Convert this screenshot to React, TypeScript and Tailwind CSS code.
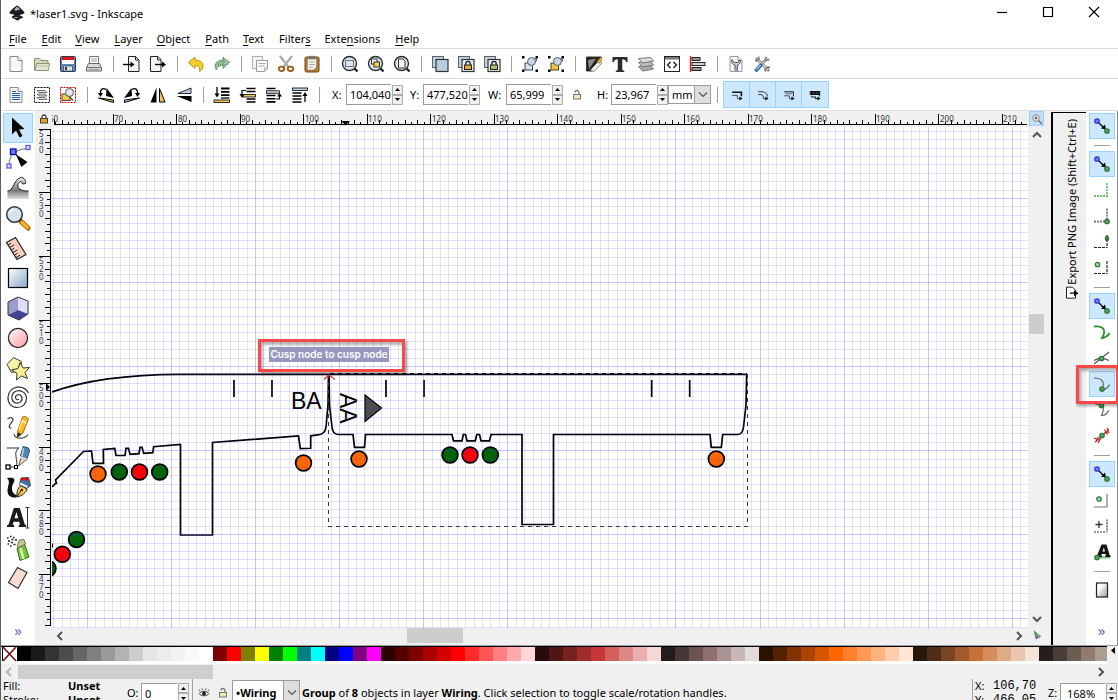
import React from "react";

type Kids = { children?: React.ReactNode };

const PAGE = "M4 2.5h8l4 4v11H4z";

function Ico({ children }: Kids) {
  return (
    <svg viewBox="0 0 20 20" className="size-5 shrink-0" fill="none" aria-hidden="true">
      {children}
    </svg>
  );
}

function Page({ stroke = "#8a8a8a" }: { stroke?: string }) {
  return (
    <>
      <path d={PAGE} fill="#f7f7f7" stroke={stroke} />
      <path d="M12 2.5v4h4" fill="#fff" stroke={stroke} />
    </>
  );
}

function Lens({ children }: Kids) {
  return (
    <>
      <path d="M14.5 14.5l3 3" stroke="#222" strokeWidth="2.4" />
      <circle cx="9.5" cy="9.5" r="7" fill="#dde6ec" stroke="#2b2b2b" strokeWidth="1.4" />
      {children}
    </>
  );
}

function Stack({ lock }: { lock?: string }) {
  return (
    <>
      <rect x="2.5" y="2.5" width="11" height="11" fill="#c3d3e2" stroke="#56616c" />
      <rect x="6" y="5.5" width="12" height="12" fill={lock ? "#e8edf2" : "#b9cde0"} stroke="#333" strokeWidth="1.2" />
      {lock && (
        <>
          <path d="M9.8 11V9.5a2.2 2.2 0 0 1 4.4 0V11" stroke="#222" strokeWidth="1.3" />
          <rect x="8.5" y="11" width="7" height="4.5" fill={lock} stroke="#222" />
        </>
      )}
    </>
  );
}

function Handles({ fill }: { fill: string }) {
  return (
    <>
      <path d="M2 2h2.5v2.5H2zM15.5 2H18v2.5h-2.5zM2 15.5h2.5V18H2zM15.5 15.5H18V18h-2.5z" fill="#000" />
      <rect x="5" y="9" width="7.5" height="7" fill={fill} stroke="#444" />
      <path d="M12 9l3-5 2 2-5 6" fill="#cfdce8" stroke="#555" />
      <circle cx="11.5" cy="7.5" r="4" fill="#c3d6e6" stroke="#526170" />
    </>
  );
}

const fileIcons: (null | [string, React.ReactNode])[] = [
  ["New", <Page />],
  ["Open", <><path d="M2.5 16.5v-12h5l1.5 2h7v3" fill="#cfd8b8" stroke="#8b957a" /><path d="M3 16.5l1.5-7h13l-1 7z" fill="#dfe6cc" stroke="#8b957a" /><path d="M5 12h11" stroke="#b7c29c" /></>],
  ["Save", <><rect x="2.5" y="2.5" width="15" height="15" rx="1" fill="#5d86b5" stroke="#26374d" /><path d="M4 3h12v3H4z" fill="#e01818" /><path d="M4 6h12v4H4z" fill="#fff" /><path d="M5.5 12h9v5h-9z" fill="#dcdfe3" stroke="#34475f" strokeWidth=".7" /><path d="M7 13h2v3H7z" fill="#26374d" /></>],
  ["Print", <><path d="M5.5 9.5V2.5h9v7" fill="#fff" stroke="#777" /><path d="M7 5h6M7 7h6" stroke="#999" /><path d="M2.5 13.5l2-4h11l2 4v3.500h-15z" fill="#d9d9d9" stroke="#666" /><path d="M3 13.5h14" stroke="#777" /><path d="M5 15.3h10" stroke="#999" /></>],
  null,
  ["Import", <><path d="M6.5 2.5h7l3.500 3.500v11.500H6.500z" fill="#f5f5f5" stroke="#222" /><path d="M13.5 2.5V6H17" stroke="#222" /><path d="M1 10.5h9" stroke="#000" strokeWidth="1.4" /><path d="M8.5 7.5l4 3-4 3z" fill="#000" /></>],
  ["Export", <><path d="M2.5 2.5h7.500l3 3v12H2.500z" fill="#f5f5f5" stroke="#222" /><path d="M9.5 2.5V6H13" stroke="#222" /><path d="M7 10.5h8" stroke="#000" strokeWidth="1.4" /><path d="M14 7.5l4 3-4 3z" fill="#000" /></>],
  null,
  ["Undo", <path d="M2.5 8.5L9 3v3c5 0 8 2.500 8 6 0 2.500-1.500 4.500-3.500 5.500 1-3.500-.5-6-4.500-6v3z" fill="#f2cf2e" stroke="#b99212" />],
  ["Redo", <><path d="M17.5 8.5L11 3v3c-5 0-8 2.500-8 6 0 1.500.5 3 1.500 4 .5-3 2.500-4.500 6.500-4.500v3z" fill="#9cc2a0" stroke="#4d8454" strokeDasharray="1.500 .8" /><path d="M4 12c1-3 4-4.500 9-4.500M6 10.500h9M11.500 5v8" stroke="#5d9164" strokeDasharray="1 1" /></>],
  null,
  ["Copy", <><rect x="2.5" y="2.5" width="10" height="12" fill="#f2f2f2" stroke="#b0b0b0" /><path d="M6.5 6.5h11v8l-3 3h-8z" fill="#fafafa" stroke="#999" /><path d="M8.5 9.5h7M8.500 12h6M14.500 17v-3h3" stroke="#aaa" /></>],
  ["Cut", <><path d="M4 2l8.500 11M16 2L7.500 13" stroke="#777" strokeWidth="2" /><path d="M4 2l8.500 11M16 2L7.500 13" stroke="#ddd" strokeWidth=".8" /><ellipse cx="5.5" cy="14.8" rx="2.8" ry="2.2" stroke="#9a5a17" strokeWidth="1.8" /><ellipse cx="14.5" cy="14.8" rx="2.8" ry="2.2" stroke="#9a5a17" strokeWidth="1.8" /></>],
  ["Paste", <><rect x="3" y="3" width="14" height="15" rx="1.5" fill="#b87a2c" stroke="#6b4311" /><path d="M5.5 5h9v8l-3 3h-6z" fill="#f2f2f2" stroke="#888" strokeWidth=".6" /><rect x="7" y="1.8" width="6" height="3" fill="#777" /><path d="M7 8h6M7 10.500h6M7 13h4" stroke="#aaa" /></>],
  null,
  ["Zoom selection", <Lens><rect x="5.5" y="6.5" width="8" height="6" stroke="#000" strokeDasharray="1 1" /></Lens>],
  ["Zoom drawing", <Lens><rect x="5.5" y="5" width="5.5" height="5" fill="#fff" stroke="#333" /><rect x="8" y="8" width="5.5" height="5" fill="#f4d34f" stroke="#333" /></Lens>],
  ["Zoom page", <Lens><path d="M6.5 5h4.500l2 2v7H6.500z" fill="#f9f9f9" stroke="#333" /></Lens>],
  null,
  ["Duplicate", <Stack />],
  ["Clone", <Stack lock="#e9a92f" />],
  ["Unlink clone", <Stack lock="#a8c46a" />],
  null,
  ["Group", <Handles fill="#d7e3ee" />],
  ["Ungroup", <Handles fill="#f3c52c" />],
  null,
  ["Fill and stroke", <><path d="M2.5 3h15L8 17H2.500z" fill="#222" stroke="#333" /><path d="M4 6l8-1.500L5 15z" fill="#8d8d8d" /><path d="M6 16.500L15.500 6l2.500 3-8 8.500z" fill="#f4f1e6" stroke="#555" strokeWidth=".7" /><path d="M13 7.500l3.500-4 1.500 2-3 4z" fill="#e8a92e" stroke="#7a5410" strokeWidth=".5" /></>],
  ["Text and font", <path d="M2.5 3h15v5h-1.500c-.3-2-1-2.800-3.700-2.800V15c0 1.200.5 1.600 2 1.700V18H5.800v-1.300c1.500-.1 2-.5 2-1.700V5.200C5 5.200 4.300 6 4 8H2.500z" fill="#2b2b2b" />],
  ["Layers", <><path d="M2.500 12.500l12-1 3 3.500-11 2z" fill="#aaa" stroke="#777" /><path d="M2.500 8.500l12-1 3 3.500-11 2z" fill="#bbb" stroke="#777" /><path d="M2.500 4.500l12-1 3 3.500-11 2z" fill="#ddd" stroke="#777" /></>],
  ["XML editor", <><rect x="2.5" y="2.5" width="15" height="15" fill="#fafafa" stroke="#222" /><path d="M3 3h14v2.500H3z" fill="#777" /><path d="M8.500 8L5.500 11l3 3M11.500 8l3 3-3 3" stroke="#111" strokeWidth="1.2" /></>],
  ["Align", <><path d="M2.500 2v16" stroke="#d11" strokeWidth="1.3" /><rect x="4" y="3.500" width="8" height="3" fill="#999" stroke="#222" /><rect x="4" y="8.500" width="13" height="3" fill="#c9d8e6" stroke="#222" /><rect x="4" y="13.500" width="9" height="3" fill="#999" stroke="#222" /></>],
  null,
  ["Document properties", <><Page stroke="#999" /><path d="M6 5.500c-1.500 3 1 5.500 3 5.500v5.500h2.500V11c2-.5 4-3 2.500-5.500L12 8.500H8z" fill="#ccc" stroke="#555" /><path d="M9 14h2.500v3H9z" fill="#6f9fd8" /></>],
  ["Preferences", <><path d="M5 5l11 11" stroke="#777" strokeWidth="3" strokeLinecap="round" /><path d="M5 5l11 11" stroke="#e4e4e4" strokeWidth="1.400" /><path d="M3 6.500L5 7l2-2-.5-2.500M13.500 17.500l-.5-2 2.500-2.500 2.500.5" stroke="#777" strokeWidth="1.500" /><path d="M16 4l-7 6.500" stroke="#777" strokeWidth="2.600" /><path d="M16 4l-7 6.500" stroke="#eee" strokeWidth="1" /><path d="M13.500 2.500v3.500h4" stroke="#888" strokeWidth="1.300" /><path d="M8.500 11.500L4.500 16" stroke="#3e6cab" strokeWidth="3.800" strokeLinecap="round" /><path d="M8.500 11l-4 4.500" stroke="#9dc0ea" strokeWidth="1.400" /></>],
];

const BARS = "M9 3.500h8.500M9 6.800h8.500M9 10.100h8.500";

const selectIcons: (null | [string, React.ReactNode])[] = [
  ["Select all", <><Page stroke="#888" /><path d="M6 6.500h4M6 8.500h8M6 10.500h8M6 12.500h8M6 14.500h8" stroke="#1f5aa0" strokeWidth="1.200" /></>],
  ["Select all in all layers", <><rect x="2.5" y="2.5" width="15" height="15" stroke="#000" strokeDasharray="2 1" /><path d="M5 5.500h8l2 2H7zM5 9h8l2 2H7zM5 12.500h8l2 2H7z" fill="#ddd" stroke="#555" strokeWidth=".8" /></>],
  ["Deselect", <><rect x="2.5" y="2.5" width="15" height="15" stroke="#c00" strokeDasharray="2 1" /><rect x="4" y="9" width="8" height="6.5" fill="#f3c83e" stroke="#444" /><path d="M10 10l5 5.500" stroke="#555" strokeWidth="1.5" /><circle cx="11.500" cy="7.500" r="4" fill="#dbe6ee" stroke="#555" /></>],
  null,
  ["Rotate left", <><path d="M10.500 3l7.500 10-8-2z" fill="#000" /><path d="M2.500 13l15 2v2.500z" fill="#f1c661" stroke="#000" /><path d="M10 4.500C7 2.500 4 4 4.500 9" stroke="#000" strokeWidth="1.300" /><path d="M2 8h5l-2.500 4z" fill="#000" /></>],
  ["Rotate right", <><path d="M9.500 3L2 13l8-2z" fill="#000" /><path d="M17.500 13l-15 2v2.500z" fill="#c2d2e0" stroke="#000" /><path d="M10 4.500c3-2 6-.5 5.500 4.500" stroke="#000" strokeWidth="1.300" /><path d="M18 8h-5l2.500 4z" fill="#000" /></>],
  ["Flip horizontal", <><path d="M8.500 2.500v15h-6z" fill="#000" /><path d="M11.500 3.500v13.500h5.500z" fill="#f1c661" stroke="#000" /></>],
  ["Flip vertical", <><path d="M17 3v5.500H4z" fill="#b9cbdc" stroke="#000" strokeWidth=".8" /><path d="M17.500 17v-6h-15z" fill="#000" /></>],
  null,
  ["Lower to bottom", <><path d={BARS} stroke="#000" strokeWidth="1.800" /><path d="M9 13h8.500" stroke="#000" strokeWidth="1.3" /><rect x="2" y="15" width="15.5" height="2.500" fill="#f1c661" stroke="#000" strokeWidth=".8" /><path d="M5 2v8" stroke="#000" strokeWidth="1.3" /><path d="M2.500 8.500h5L5 12.500z" fill="#000" /></>],
  ["Lower", <><path d="M8.500 3.500h9M8.500 6.500h9M8.500 14h9M8.500 17h9" stroke="#000" strokeWidth="1.600" /><rect x="5" y="9.500" width="12.5" height="2.500" fill="#f1c661" stroke="#000" strokeWidth=".8" /><path d="M8 5.500H4V10" stroke="#000" strokeWidth="1.2" /><path d="M1.500 9h5L4 13z" fill="#000" /></>],
  ["Raise", <><path d="M2.500 3.500h9M2.500 10.500h9M2.500 13.700h9M2.500 16.900h9" stroke="#000" strokeWidth="1.600" /><rect x="2.500" y="5.800" width="13" height="2.500" fill="#c2d2e0" stroke="#000" strokeWidth=".8" /><path d="M12 14h3.500v-3" stroke="#000" strokeWidth="1.2" /><path d="M13 11.500h5l-2.500-3.500z" fill="#000" /></>],
  ["Raise to top", <><path d="M2.500 8h9M2.500 11h9M2.500 14h9M2.500 17h9" stroke="#000" strokeWidth="1.700" /><rect x="2.500" y="3" width="15" height="2.500" fill="#c2d2e0" stroke="#000" strokeWidth=".8" /><path d="M15 17V9" stroke="#000" strokeWidth="1.3" /><path d="M12.500 11H17.500L15 7z" fill="#000" /></>],
];

const affectIcons: [string, React.ReactNode][] = [
  ["Scale stroke width", <><path d="M4 6.500h11.500v5" stroke="#111" strokeWidth="2" /><path d="M4 10.500h6.500v4h3" stroke="#444" strokeWidth="1.200" /></>],
  ["Scale rounded corners", <><path d="M4 6h4.500c4 0 7 2.500 7 6" stroke="#333" strokeWidth="1.300" /><path d="M4 9.500h3.500c2 0 3 2 3 5h3" stroke="#333" strokeWidth="1.200" /></>],
  ["Move gradients", <><path d="M4 6h11.500v6" stroke="#222" strokeWidth="1.300" /><path d="M5 8h9" stroke="#8a93a5" strokeWidth="2.500" /><path d="M4 11h6.500v3.500h3" stroke="#444" strokeWidth="1.200" /></>],
  ["Move patterns", <><path d="M3.500 7.500h13" stroke="#111" strokeWidth="5" /><path d="M3.500 7.500h13" stroke="#9aa" strokeDasharray="1.500 2.500" /><path d="M6 11v1.500h4.500v2h3M15.500 9v3" stroke="#222" strokeWidth="1.300" /></>],
];

const toolIcons: [string, React.ReactNode][] = [
  ["Select", <path d="M8 3.500v17l4-4 3.500 7 3-1.500-3.500-6.500 5.500-.5z" fill="#000" />],
  ["Edit nodes", <><path d="M5 22C5 12 10 5.500 23 4.500" stroke="#666" /><rect x="3" y="20" width="4" height="4" fill="#dcdcff" stroke="#6666e8" strokeWidth="1.4" /><rect x="22" y="1.500" width="4" height="4" fill="#dcdcff" stroke="#6666e8" strokeWidth="1.4" /><rect x="6.500" y="5" width="5.5" height="5.5" fill="#6d7cf0" stroke="#1414b8" strokeWidth="1.4" /><path d="M11.500 10l12 8-6 5z" fill="#000" /></>],
  ["Tweak", <><path d="M3.500 25v-8c6 0 6-11 13-13.500 4 0 5.500 3 5 6l-3 .5c0-2-2-3-3.500-1.500-3 3-1 9 9.500 8.500v8z" fill="url(#gray)" /><path d="M3.500 17c6 0 6-11 13-13.500 4 0 5.500 3 5 6l-3 .5c0-2-2-3-3.500-1.500-3 3-1 9 9.500 8.500" stroke="#222" /></>],
  ["Zoom", <><path d="M17 17.500l7 6.500" stroke="#8c5200" strokeWidth="5" strokeLinecap="round" /><path d="M18 18.500l5.500 5" stroke="#ffb31a" strokeWidth="3.5" strokeLinecap="round" /><circle cx="10.500" cy="10.500" r="7.8" fill="#d4e2ef" stroke="#333" strokeWidth="1.5" /><path d="M5.500 10a5 5 0 0 1 5-4.500" stroke="#fff" strokeWidth="1.5" /></>],
  ["Measure", <><path d="M2.500 8.500L11.500 3.500 22 20.500 13 25.500z" fill="#f5cdbc" stroke="#222" strokeWidth="1.2" /><path d="M4 11l3-1.700M5.500 13.500l4.500-2.500M7.200 16l3-1.700M8.800 18.500l4.500-2.500M10.500 21l3-1.700M12 23.500l4-2.200" stroke="#222" /></>],
  ["Rectangle", <rect x="4.500" y="4.500" width="19" height="19" fill="url(#blue)" stroke="#000" strokeWidth="1.2" />],
  ["3D box", <><path d="M4 8L14 3v13L4 21z" fill="#9b9bd0" /><path d="M14 3l10 4v13l-10-4z" fill="#dedef6" /><path d="M4 21l10-5 10 4-9 6z" fill="#44449a" /><path d="M4 8L14 3l10 4v13l-9 6-11-5z" stroke="#333" /></>],
  ["Ellipse", <circle cx="14" cy="14" r="9.6" fill="url(#pink)" stroke="#222" strokeWidth="1.2" />],
  ["Star", <><path d="M9.500 3.500l8 4-1.500 9-8.500 2-4.500-8z" fill="#f7f1a8" stroke="#444" /><path d="M16 8.500l3 5.500 6.500-.5-4.500 5 2.500 6-6-2.500-5 4 .5-6.500-5.500-3.500 6.500-1.500z" fill="#fbef8e" stroke="#333" /></>],
  ["Spiral", <path d="M15 15c-1 1.500-3.500.5-3.500-1.500 0-3 4.500-4 6-1 2 4-2 7.500-5.500 6.500-5-1.500-5.500-8-1.500-11 5-3.500 11.500 0 12 6 .2 5.500-4 9.500-9 9.500-6.500 0-10-5-9.500-10.500C4.500 8 8 4 13 3.200c5.500-.7 9.500 2 11.500 5.800" stroke="#333" strokeWidth="1.2" />],
  ["Pencil", <><path d="M3.500 5c5-3 7 0 4 3.500s-3 6 0 5.500M10 20c1 6 11 5 14 .5" stroke="#444" strokeWidth="1.2" /><path d="M13 23.500l1-7.500L18.500 3c2-1.200 5 0 6 2L19 19z" fill="#ffb820" stroke="#8a4f00" strokeWidth=".8" /><path d="M17.500 7l4.500 2" stroke="#fff0b0" strokeWidth="2" /><path d="M15 16l3-9" stroke="#ffe28a" strokeWidth="1.500" /><path d="M13 23.500l.7-5 4 1.500z" fill="#222" /></>],
  ["Bezier", <><path d="M3 4h12C8 8 15 17 12 23H4.500" stroke="#333" /><rect x="2" y="21" width="4" height="4" fill="#fff" stroke="#000" strokeWidth="1.3" /><rect x="10.500" y="21.500" width="3" height="3" fill="#fff" stroke="#000" /><path d="M14.500 22l2.500-8 5 2z" fill="#f3dfb0" stroke="#333" strokeWidth=".8" /><path d="M16.500 12L19 2.500l5.500 1.500 1 3-3 9z" fill="#4f86b5" stroke="#24486a" /><path d="M19.500 4l-1.500 8" stroke="#b5d3ea" strokeWidth="1.500" /><path d="M16 13l6.500 2.500" stroke="#ddd" strokeWidth="2" /></>],
  ["Calligraphy", <><path d="M3 4c7-1 9 1 6.500 5-3 5-2 12 6 13-5 3-12 1.500-12-5C3.500 11 7 8 3 4z" fill="#111" /><path d="M13 23c-.5-5 .5-9 4-11.500l6 3.500c0 3-5 7-10 8z" fill="#f6c650" stroke="#222" /><path d="M17 4l7.500-.5 2 8-4 3-7-3.500z" fill="#3f76a8" stroke="#222" strokeWidth=".8" /><path d="M17 5l8 .5" stroke="#d11" strokeWidth="2.500" /><path d="M16 9.500l7.500 3.500" stroke="#e8eef5" strokeWidth="2" /><path d="M13.500 22l4-6" stroke="#222" /><circle cx="17.800" cy="16" r="1.200" fill="#222" /></>],
  ["Text", <><path d="M3 23v-1.800l1.600-.7L9.800 4h6l5 16.500 1.400.7V23h-7.500v-1.800l1.300-.6-.8-2.800H9.600l-.9 2.800 1.500.6V23zM10.500 14.300h3.700l-1.700-6.300z" fill="#1a1a1a" /><path d="M21.500 3.500h4M21.500 24h4M23.500 3.500V24" stroke="#333" /></>],
  ["Spray", <><path d="M13 14.500l7.500-4.500 4.500 13-9 3.500z" fill="#7fc241" stroke="#2f6d12" /><path d="M16.500 14l3 11" stroke="#d3f3ae" strokeWidth="2.500" /><path d="M13.500 11l2-5 4.500-.5 1.500 4.500-7.500 4z" fill="#c9c98a" stroke="#555" strokeWidth=".8" /><path d="M3 4h1.500M6 2.500h1.500M9 3.500h1.500M4 7h2M7.500 5.500h2M11 6h2M3.500 10h1.500M7 8.500h2M6 12h1.500M9.500 10.500h2" stroke="#222" strokeWidth="1.500" /></>],
  ["Eraser", <path d="M13.500 3.500l9.500 5L14 24.500l-9.500-6z" fill="#f9dcd0" stroke="#333" strokeWidth="1.2" />],
];

function Pin({ x, y, fill = "#5f9f6a", stroke = "#2b7a3b" }: { x: number; y: number; fill?: string; stroke?: string }) {
  return <circle cx={x} cy={y} r="2.2" fill={fill} stroke={stroke} strokeWidth="1.3" />;
}

const SnapMain = (
  <>
    <Pin x={5} y={5} fill="#7c7cff" stroke="#3434e0" />
    <path d="M7 7l4 4" stroke="#000" strokeWidth="1.2" />
    <path d="M14 13.500l-5-1 4-4z" fill="#000" />
    <Pin x={15} y={15} />
  </>
);

type Snap = null | { name: string; on?: boolean; marked?: boolean; icon: React.ReactNode };
const snapIcons: Snap[] = [
  { name: "Enable snapping", on: true, icon: SnapMain },
  null,
  { name: "Snap bounding boxes", on: true, icon: SnapMain },
  { name: "Snap to edges", icon: <path d="M2 16h14M15 3v13" stroke="#6fbf6f" strokeWidth="1.8" strokeDasharray="2 1" /> },
  { name: "Snap to corners", icon: <><path d="M2 15.500h13M15 2.500v13" stroke="#777" strokeWidth="1.8" strokeDasharray="2 1" /><Pin x={15} y={15.5} /></> },
  { name: "Snap edge midpoints", icon: <><path d="M2 15.500h13.500M15 3v13" stroke="#222" strokeWidth="1.200" strokeDasharray="3 1" /><ellipse cx="15" cy="6.500" rx="1.7" ry="2.5" fill="#2f8a2f" stroke="#3a5f3a" /></> },
  { name: "Snap centers", icon: <><path d="M2 15.500h13.500M15 3v13" stroke="#222" strokeWidth="1.200" strokeDasharray="3 1" /><Pin x={5.5} y={6.5} fill="#a9dba9" /></> },
  null,
  { name: "Snap nodes", on: true, icon: SnapMain },
  { name: "Snap to paths", icon: <path d="M2 4.500c9-1 13 3 8 11.500 3-.5 6-2 7.500-5" stroke="#2f8f2f" strokeWidth="1.8" /> },
  { name: "Snap path intersections", icon: <><path d="M2 16L17 4M2 12.500c5-3 10-2.500 15 0" stroke="#555" strokeWidth="1.2" /><Pin x={9.5} y={10.5} /></> },
  { name: "Snap cusp nodes", on: true, marked: true, icon: <><path d="M2 4c9 0 11 5 8 12 4-.5 6-2 7.500-5.500" stroke="#666" strokeWidth="1.2" /><Pin x={10} y={15} /></> },
  { name: "Snap smooth nodes", icon: <><path d="M3 4l6 1.500c3 1 3 6 .5 10 4 0 6-2 7-5" stroke="#666" strokeWidth="1.2" /><Pin x={9.5} y={5.5} /></> },
  { name: "Snap line midpoints", icon: <><path d="M3 16.500L17 3" stroke="#888" strokeWidth="1.2" /><path d="M2 12l6 2.500M3.500 16l3-5M6 17l3-5M12 7.500l5-2M12.500 3.500l3 5M15 2l2 5" stroke="#c22" strokeWidth="1.2" /><Pin x={10} y={9.5} /></> },
  null,
  { name: "Snap other points", on: true, icon: SnapMain },
  { name: "Snap object centers", icon: <><path d="M2 17h13.500M15 4v13" stroke="#777" strokeWidth="1.200" /><Pin x={7} y={9} fill="#a9dba9" /></> },
  { name: "Snap rotation centers", icon: <><path d="M2 16h12M15 3.500v13" stroke="#333" strokeWidth="1.2" strokeDasharray="2 1" /><path d="M3.500 8.500h7M7 5v7" stroke="#333" strokeWidth="1.3" /></> },
  { name: "Snap text baseline", icon: <><path d="M4 15.500h14" stroke="#7cc07c" strokeWidth="2" /><path d="M4 15v-1.200l1.200-.5L9.500 2.500h5l3.200 10.800 1 .5V15h-5.500v-1.200l.8-.4-.4-1.400H9.700l-.4 1.400 1 .4V15zM10.500 9.500h2.400l-1-4z" fill="#151515" /><Pin x={5} y={15.5} /></> },
  null,
  { name: "Snap to page border", icon: <rect x="4.500" y="3" width="11" height="14" fill="url(#pageg)" stroke="#222" strokeWidth="1.2" /> },
];

const palette =
  "000000 1a1a1a 333333 4d4d4d 666666 808080 999999 b3b3b3 cccccc e6e6e6 ececec f2f2f2 f9f9f9 ffffff 800000 ff0000 808000 ffff00 008000 00ff00 008080 00ffff 000080 0000ff 800080 ff00ff 2b0000 550000 800000 aa0000 d40000 ff0000 ff2a2a ff5555 ff8080 ffaaaa ffd5d5 280b0b 501616 782121 a02c2c c83737 d35f5f de8787 e9afaf f4d7d7 241c1c 483737 6c5353 916f6f ac9393 c8b7b7 e3dbdb 2b1100 552200 803300 aa4400 d45500 ff6600 ff7f2a ff9955 ffb380 ffccaa ffe6d5 28170b 502d16 784421 a05a2c c87137 d38d5f deaa87 e9c6af f4e3d7 241f1c 483e37 6c5d53 917c6f ac9d93".split(" ");

const menus: [string, number][] = [["File", 0], ["Edit", 0], ["View", 0], ["Layer", 0], ["Object", 0], ["Path", 0], ["Text", 0], ["Filters", 6], ["Extensions", 4], ["Help", 0]];

function Strip({ items }: { items: (null | [string, React.ReactNode])[] }) {
  return (
    <>
      {items.map((it, i) =>
        it ? (
          <button key={i} aria-label={it[0]} className="flex h-[26px] w-[26px] shrink-0 items-center justify-center">
            <Ico>{it[1]}</Ico>
          </button>
        ) : (
          <Sep key={i} />
        )
      )}
    </>
  );
}

function Sep() {
  return (
    <span className="flex w-3 shrink-0 justify-center">
      <span className="h-4 w-px bg-[#a0a0a0]" />
    </span>
  );
}

function Spinner({ name }: { name: string }) {
  return (
    <span className="flex h-5 w-[11px] shrink-0 flex-col">
      {["up", "down"].map((d) => (
        <button key={d} aria-label={`${name} ${d}`} className="flex flex-1 items-center justify-center border border-[#adadad] bg-[#f0f0f0]">
          <svg viewBox="0 0 5 3" className="h-[3px] w-[5px]" aria-hidden="true">
            <path d={d === "up" ? "M0 3L2.5 0 5 3z" : "M0 0h5L2.5 3z"} fill="#000" />
          </svg>
        </button>
      ))}
    </span>
  );
}

function Field({ id, label, value, className }: { id: string; label: string; value: string; className: string }) {
  return (
    <span className={`flex shrink-0 items-center ${className}`}>
      <label htmlFor={id} className="grow">{label}</label>
      <input id={id} defaultValue={value} className="mr-px h-[21px] w-[45px] border border-r-0 border-[#9a9a9a] bg-white pl-[3px] outline-none" />
      <Spinner name={id} />
    </span>
  );
}

function Drop({ id, label, options, className }: { id: string; label: string; options: string; className: string }) {
  return (
    <span className={`relative flex shrink-0 border border-[#9a9a9a] bg-white ${className}`}>
      <select id={id} aria-label={label} className="w-full appearance-none bg-transparent pl-[3px] outline-none">
        <option>{options}</option>
      </select>
      <span className="pointer-events-none absolute inset-y-0 right-0 flex w-4 items-center justify-center border-l border-[#9a9a9a] bg-[#dedede]">
        <Chevron d="M1 2.500l4 4 4-4" />
      </span>
    </span>
  );
}

function Chevron({ d, bold, faint }: { d: string; bold?: boolean; faint?: boolean }) {
  return (
    <svg viewBox="0 0 10 10" className="size-[10px]" fill="none" aria-hidden="true">
      <path d={d} stroke={faint ? "#b5b5b5" : "#555"} strokeWidth={bold ? 2 : 1.2} />
    </svg>
  );
}

function Lock({ fill, open }: { fill: string; open?: boolean }) {
  return (
    <svg viewBox="0 0 10 12" className="h-3 w-[10px] shrink-0" fill="none" aria-hidden="true">
      <path d={open ? "M7 6V3.500a2 2 0 0 0-4 0" : "M3 6V4a2 2 0 0 1 4 0v2"} stroke={open ? "#777" : "#444"} strokeWidth="1.3" />
      <rect x="1.500" y="5.500" width="7" height="4.5" fill={fill} stroke={open ? "#777" : "#444"} />
    </svg>
  );
}

const range = (n: number) => Array.from({ length: n }, (_, i) => i);

function TopRuler() {
  return (
    <svg className="h-full w-full" aria-hidden="true">
      <g transform="translate(-52 -111)">
        <g shapeRendering="crispEdges">
          <path d="M54 124.500h973M54.500 119v6" stroke="#000" />
          {range(153).map((i) => {
            const x = Math.floor(55.9 + i * 6.352) + 0.5;
            const top = (i - 9) % 10 === 0 ? 114 : i % 2 ? 120 : 122;
            return x < 1027 ? <path key={i} d={`M${x} ${top}V125`} stroke="#000" /> : null;
          })}
        </g>
        <g fontFamily="'Noto Sans', sans-serif" fontSize="8" fill="#333">
          <text x="49" y="122">60</text>
          {range(15).map((i) => (
            <text key={i} x={Math.round(114 + i * 63.52)} y="122">{70 + i * 10}</text>
          ))}
        </g>
        <path d="M341 121h9l-4.500 4z" fill="#000" />
      </g>
    </svg>
  );
}

function SideRuler() {
  return (
    <svg className="h-full w-full" aria-hidden="true">
      <g transform="translate(-35 -126)">
        <g shapeRendering="crispEdges">
          <path d="M50.500 129v497" stroke="#000" />
          {range(79).map((i) => {
            const y = Math.floor(129.3 + i * 6.36) + 0.5;
            const left = i % 10 === 0 ? 39 : i % 2 ? 47 : 45;
            return y < 627 ? <path key={i} d={`M${left} ${y}H51`} stroke="#000" /> : null;
          })}
        </g>
        <g fontFamily="'Noto Sans', sans-serif" fontSize="8" fill="#333f5a">
          {range(8).map((i) =>
            String(540 - i * 10).split("").map((c, j) => (
              <text key={`${i}-${j}`} x="39" y={Math.round(137 + i * 63.6 + j * 8)}>{c}</text>
            ))
          )}
        </g>
        <path d="M46 383v8l4-4z" fill="#000" />
      </g>
    </svg>
  );
}

const dots: [number, number, string][] = [
  [98, 474, "#ff6600"], [119.3, 472, "#006400"], [139.5, 472, "#ff0000"], [159.7, 472, "#006400"],
  [76.5, 539.5, "#006400"], [62.3, 554.3, "#ff0000"], [48, 568.5, "#006400"], [303.5, 463, "#ff6600"],
  [359, 459, "#ff6600"], [450, 455, "#006400"], [470, 455, "#ff0000"], [490.3, 455, "#006400"], [716.3, 459, "#ff6600"],
];

function Drawing() {
  return (
    <svg className="absolute inset-0 h-full w-full" fill="none" role="img" aria-label="laser1.svg canvas">
      <g transform="translate(-52 -127)">
        <g stroke="#000" strokeWidth="1.7">
          <path d="M52 392C85 380 130 374.500 180 374.300H747" />
          <path d="M52 487l3.500-3.500 1-.5-1-3 28-28.500 8-.7 1.500 12.500h10.500l-.2-13.800 11.500-1 1.200 7 9-.2 1-7h2.500l1.500 6 9-.6 1-6.400h2l1.700 6 9-.6 1-6 26.800-2.200V535h32v-92.500l86-6.500 1.800 12.700 10.400-.4v-12.500l7.300-1c6-.3 7.500-3.800 8-7.800l2-22 .5-31" />
          <path d="M329 374l.5 31 2.500 22c.5 5 3 7.300 6 7.500h15l1.500 12.800h10l1-12.800H452l1.500 6.300h8.500l1.300-6.300h2.200l1.500 6.300h8.300l1.500-6.300h2.700l1.500 6.300h8.500l1.500-6.300h31V524.500h31.500v-90H710l1.300 12.800h10l1.400-12.800H738c4-.3 5-3.500 5.500-7.500l2.500-22 .7-31" />
          <path d="M234 380v17M272 380v17M386 380v17M424 380v17M651.700 380v17M689.700 380v17" />
          <path d="M365 395l16.500 13L365 421.500z" fill="#4d4d4d" strokeWidth="1.2" />
          {dots.map(([x, y, c], i) => (
            <circle key={i} cx={x} cy={y} r="7.9" fill={c} />
          ))}
        </g>
        <path d="M52 543.500h1v4h-1z" fill="#000" />
        <g shapeRendering="crispEdges" strokeDasharray="4 4">
          <path d="M328.500 374v152.500H747.500V374" stroke="#333" />
          <path d="M330 373.500h417" stroke="#000" />
        </g>
        <path d="M324 379.500l5-4.500 6 4.500" stroke="#d33" strokeWidth="1.2" />
        <g fontFamily="'Liberation Sans', sans-serif" fontSize="23" fill="#000">
          <text x="291" y="409">BA</text>
          <text transform="translate(340 393) rotate(90)">AA</text>
        </g>
        <g shapeRendering="crispEdges" stroke="#3f3fff">
          {range(117).map((i) => {
            const x = Math.floor(53.7 + i * 8.409) + 0.5;
            return <path key={i} d={`M${x} 127V5000`} opacity={i % 10 === 4 ? 0.3 : 0.15} />;
          })}
          {range(60).map((i) => {
            const y = Math.floor(131.3 + i * 8.403) + 0.5;
            return <path key={i} d={`M52 ${y}H5000`} opacity={i % 10 === 8 ? 0.3 : 0.15} />;
          })}
        </g>
      </g>
    </svg>
  );
}

export default function App() {
  return (
    <div className="flex h-screen flex-col overflow-hidden border-l border-[#5c5c66] bg-[#f0f0f0] font-['Noto_Sans','Open_Sans',sans-serif] text-[11px] leading-[14px] text-black">
      <svg className="absolute size-0" aria-hidden="true">
        <defs>
          <linearGradient id="gray" x1="0" y1="0" x2="0" y2="1"><stop offset="0" stopColor="#eee" /><stop offset=".6" stopColor="#777" /><stop offset="1" stopColor="#ddd" /></linearGradient>
          <linearGradient id="blue" x1="0" y1="0" x2="1" y2="1"><stop offset="0" stopColor="#fff" /><stop offset="1" stopColor="#86a9c9" /></linearGradient>
          <linearGradient id="pink" x1="0" y1="0" x2="1" y2="1"><stop offset="0" stopColor="#fff" /><stop offset="1" stopColor="#ff9aa2" /></linearGradient>
          <linearGradient id="pageg" x1="1" y1="1" x2="0" y2="0"><stop offset="0" stopColor="#999" /><stop offset=".7" stopColor="#fff" /></linearGradient>
        </defs>
      </svg>

      <header className="flex h-7 shrink-0 items-center bg-white pl-2">
        <svg viewBox="0 0 16 16" className="mr-[5px] size-4 -translate-y-px" aria-hidden="true">
          <path d="M8 .5c1 0 7.500 6 7.500 7.200S12.500 9 11 10s3 1 3 2.200-3 1-3.500 2S8.500 15.500 8 15.500s-1-1.300-3-1.800S2 11.500 3.500 11 6 10 4.500 9.500.5 9 .5 7.700 7 .5 8 .5z" fill="#1d1d1d" />
          <path d="M8 1.500l3 2.700-1.500 1L8.500 4.700 7 6.200 6 5 4.800 5.200z" fill="#9fb0c8" />
          <path d="M5 12.500h4" stroke="#7c8aa0" />
        </svg>
        <h1 className="grow text-[11px]">*laser1.svg - Inkscape</h1>
        {[["Minimize", "M0 5.500h10"], ["Maximize", "M.5.500h9v9h-9z"], ["Close", "M0 0l10 10M10 0L0 10"]].map(([n, d]) => (
          <button key={n} aria-label={n} className="flex h-7 w-[46px] items-center justify-center pb-1 pr-[2px]">
            <svg viewBox="0 0 10 10" className="size-[10px] overflow-visible" fill="none" aria-hidden="true"><path d={d} stroke="#000" strokeWidth="1.2" /></svg>
          </button>
        ))}
      </header>

      <nav className="flex h-[21px] shrink-0 items-center gap-[14px] border-b border-[#dcdcdc] bg-white pl-2 pt-px">
        {menus.map(([m, u]) => (
          <button key={m} className="-mr-px whitespace-pre pr-px first:mr-0 odd:mr-0">
            {m.slice(0, u)}<u className="underline-offset-2">{m[u]}</u>{m.slice(u + 1)}
          </button>
        ))}
      </nav>

      <div className="flex h-[30px] shrink-0 items-center border-b border-[#dcdcdc] bg-white pl-[2px]">
        <Strip items={fileIcons} />
      </div>

      <div className="flex h-8 shrink-0 items-center border-b border-[#dcdcdc] bg-white pl-[2px]">
        <Strip items={selectIcons} />
        <Sep />
        <Field id="X" label="X:" value="104,040" className="ml-[7px] w-[71px]" />
        <Field id="Y" label="Y:" value="477,520" className="ml-[7px] w-[70px]" />
        <Field id="W" label="W:" value="65,999" className="ml-2 w-[75px]" />
        <button aria-label="Lock width and height" className="flex w-[34px] justify-center pr-[6px]"><Lock open fill="#f4e7b5" /></button>
        <Field id="H" label="H:" value="23,967" className="w-[71px]" />
        <Drop id="unit" label="Unit" options="mm" className="h-[19px] w-[43px]" />
        <Sep />
        <span className="flex divide-x divide-[#99d1ff] border border-[#99d1ff] bg-[#cce8ff]">
          {affectIcons.map(([n, ic]) => (
            <button key={n} aria-label={n} className="flex h-[25px] w-[26px] items-center justify-center">
              <svg viewBox="0 0 20 20" className="size-4 shrink-0" fill="none" aria-hidden="true">{ic}<path d="M13 12l4 2.500-4 2.500z" fill="#111" /></svg>
            </button>
          ))}
        </span>
      </div>

      <div className="flex min-h-0 grow">
        <aside className="flex w-[34px] shrink-0 flex-col bg-white pl-[2px] pt-[2px]">
          {toolIcons.map(([n, ic], i) => (
            <button key={n} aria-label={n} className={`flex h-[30px] w-[30px] shrink-0 items-center justify-center border ${i === 0 ? "border-[#99d1ff] bg-[#cce8ff]" : "border-transparent"}`}>
              <svg viewBox="0 0 28 28" className="size-7 shrink-0" fill="none" aria-hidden="true">{ic}</svg>
            </button>
          ))}
          <button aria-label="More tools" className="mt-auto h-7 w-[30px] pb-[2px] text-[15px] text-[#6a6aa8]">»</button>
        </aside>

        <main className="grid min-w-0 grow grid-cols-[17px_1fr_1px_15px] grid-rows-[15px_1px_1fr_17px] pr-[7px]">
          <button aria-label="Lock guides" className="flex items-center justify-center"><Lock fill="#e0a81e" /></button>
          <div className="min-w-0"><TopRuler /></div>
          <span />
          <button aria-label="Zoom canvas" className="flex items-center justify-center border border-[#99d1ff] bg-[#c4dff5]">
            <svg viewBox="0 0 12 12" className="size-3" fill="none" aria-hidden="true"><circle cx="5" cy="5" r="3.3" fill="#eee" stroke="#888" /><path d="M3.500 5h3M5 3.500v3M7.500 7.500l3.500 3.500" stroke="#666" strokeWidth="1.3" /></svg>
          </button>
          <div className="row-span-2"><SideRuler /></div>
          <span className="col-span-2" />
          <div className="row-span-2 flex flex-col items-center justify-between py-1">
            <button aria-label="Scroll up"><Chevron bold d="M1 7l4-4 4 4" /></button>
            <span className="mt-[174px] h-5 w-[15px] bg-[#cdcdcd]" />
            <span className="grow" />
            <button aria-label="Scroll down"><Chevron bold d="M1 3l4 4 4-4" /></button>
          </div>
          <div className="relative min-h-0 overflow-hidden bg-white">
            <Drawing />
            <div className="absolute left-[206px] top-[212px] flex h-[33px] w-[147px] border-[3px] border-[#f84848] pl-2 pt-[5px] shadow-[2px_2px_3px_rgba(0,0,0,0.35),inset_2px_3px_3px_rgba(0,0,0,0.3)]">
              <span className="h-[15px] w-[120px] whitespace-nowrap bg-[#9797c0] text-center font-['Inter',sans-serif] text-[10px] font-semibold leading-[14px] text-white">Cusp node to cusp node</span>
            </div>
          </div>
          <span />
          <span />
          <div className="flex items-center pb-[2px]">
            <button aria-label="Scroll left" className="ml-[3px]"><Chevron bold d="M7 1L3 5l4 4" /></button>
            <span className="ml-[342px] h-[15px] w-14 bg-[#cdcdcd]" />
            <span className="grow" />
            <button aria-label="Scroll right" className="mr-1"><Chevron bold d="M3 1l4 4-4 4" /></button>
          </div>
          <span />
          <button aria-label="Color management" className="flex items-center justify-center pb-1">
            <svg viewBox="0 0 10 10" className="size-[10px]" aria-hidden="true"><path d="M1.500 0l8 6.500-5.500 3z" fill="#999" /><path d="M2 1l3.500 3L3 6z" fill="#3a9a5a" /><path d="M3 6l1 3L6 7z" fill="#35a" /><path d="M6 5l2.500 1.500L7 8z" fill="#c66" /></svg>
          </button>
        </main>

        <section className="mt-px flex w-[35px] shrink-0 justify-center border-l-2 border-t border-black pl-1 pt-[6px]">
          <button className="flex rotate-180 items-center gap-px self-start leading-[16px] [writing-mode:vertical-rl]">
            <svg viewBox="0 0 14 14" className="size-[14px] rotate-180" fill="none" aria-hidden="true"><path d="M1.500 1.500h6l3 3v8h-9z" fill="#fff" stroke="#222" /><path d="M5 7.500h5" stroke="#000" strokeWidth="1.3" /><path d="M9 4.500l4.500 3L9 10.500z" fill="#000" /></svg>
            Export PNG Image (Shift+Ctrl+E)
          </button>
        </section>

        <aside className="flex w-8 shrink-0 flex-col items-center border-r border-[#8a8a8a] bg-white pt-[2px]">
          {snapIcons.map((s, i) =>
            s ? (
              <button key={i} aria-label={s.name} className={`relative flex h-[26px] w-[26px] shrink-0 items-center justify-center border ${s.on ? "border-[#99d1ff] bg-[#cce8ff]" : "border-transparent"}`}>
                <Ico>{s.icon}</Ico>
                {s.marked && <span className="absolute -left-[14px] -top-[7px] z-10 h-[39px] w-[43px] border-[3px] border-[#f84848] shadow-[1px_2px_3px_rgba(0,0,0,0.35),inset_2px_3px_3px_rgba(0,0,0,0.3)]" />}
              </button>
            ) : (
              <span key={i} className="flex h-3 shrink-0 items-center"><span className="h-px w-4 bg-[#a0a0a0]" /></span>
            )
          )}
          <button aria-label="More snap options" className="mt-auto h-7 pb-[2px] text-[15px] text-[#6a6aa8]">»</button>
        </aside>
      </div>

      <div className="flex h-5 shrink-0 border-t border-[#a0a0a0]">
        <div className="flex h-[18px] min-w-0 grow overflow-hidden border-b-[3px] border-t border-b-white border-t-black pl-px">
          <button aria-label="No color" className="w-[15px] shrink-0 bg-white">
            <svg viewBox="0 0 15 14" className="h-[14px] w-[15px]" fill="none" aria-hidden="true"><path d="M1 0l13 14M14 0L1 14" stroke="#7a1010" strokeWidth="1.6" /><path d="M.5 0v14" stroke="#000" /></svg>
          </button>
          {palette.map((c, i) => (
            <button key={i} aria-label={`#${c}`} className="h-[14px] w-[14px] shrink-0" style={{ backgroundColor: `#${c}` }} />
          ))}
        </div>
        <button aria-label="Palette menu" className="flex w-[11px] shrink-0 justify-center pt-px">
          <svg viewBox="0 0 4 7" className="h-[7px] w-1" aria-hidden="true"><path d="M4 0v7L0 3.500z" fill="#000" /></svg>
        </button>
      </div>
      <div className="flex h-[14px] shrink-0 items-center pr-3">
        <button aria-label="Scroll palette left" className="ml-[3px] mr-1"><Chevron bold faint d="M7 1L3 5l4 4" /></button>
        <span className="h-[14px] w-[195px] bg-[#cdcdcd]" />
        <span className="grow" />
        <button aria-label="Scroll palette right"><Chevron bold d="M3 1l4 4-4 4" /></button>
      </div>

      <footer className="h-[21px] shrink-0 overflow-hidden">
        <div className="flex h-7 items-center whitespace-nowrap">
          <div className="grid w-[124px] grid-cols-[65px_1fr] pl-[2px] leading-[14px]">
            <span>Fill:</span><b className="font-bold">Unset</b>
            <span>Stroke:</span><b className="font-bold">Unset</b>
          </div>
          <label htmlFor="opacity" className="ml-[2px] w-[14px]">O:</label>
          <input id="opacity" defaultValue="0" className="mr-px h-[21px] w-9 border border-r-0 border-[#9a9a9a] bg-white pl-[3px] outline-none" />
          <Spinner name="Opacity" />
          <span className="ml-[3px] h-7 w-px bg-[#a0a0a0]" />
          <button aria-label="Layer visibility" className="ml-[5px]">
            <svg viewBox="0 0 12 10" className="h-[10px] w-3" fill="none" aria-hidden="true"><path d="M1 5.500C3 2.500 9 2.500 11 5.500 9 8.500 3 8.500 1 5.500zM2 3L1 1.500M4.500 2L4 .5M7.500 2L8 .5M10 3l1-1.500" stroke="#444" /><circle cx="6" cy="5.500" r="2" fill="#222" /></svg>
          </button>
          <button aria-label="Lock layer" className="ml-2 mr-1"><Lock open fill="#f4e7b5" /></button>
          <span className="flex h-7 items-center font-bold"><Drop id="layer" label="Layer" options="•Wiring" className="h-[26px] w-[68px]" /></span>
          <p className="ml-[2px] min-w-0 grow overflow-hidden">
            <b className="font-bold">Group</b> of <b className="font-bold">8</b> objects in layer <b className="font-bold">Wiring</b>. Click selection to toggle scale/rotation handles.
          </p>
          <div className="grid w-[76px] shrink-0 grid-cols-[18px_1fr] border-l border-[#a0a0a0] pl-[2px]">
            <span>X:</span><span className="font-['Liberation_Mono',monospace] text-[12px]">106,70</span>
            <span>Y:</span><span className="font-['Liberation_Mono',monospace] text-[12px]">466,05</span>
          </div>
          <label htmlFor="zoom" className="w-3 shrink-0">Z:</label>
          <input id="zoom" defaultValue="168%" className="mr-px h-[21px] w-[45px] shrink-0 border border-r-0 border-[#9a9a9a] bg-white pl-[6px] outline-none" />
          <Spinner name="Zoom" />
          <span className="w-px shrink-0" />
        </div>
      </footer>
    </div>
  );
}
